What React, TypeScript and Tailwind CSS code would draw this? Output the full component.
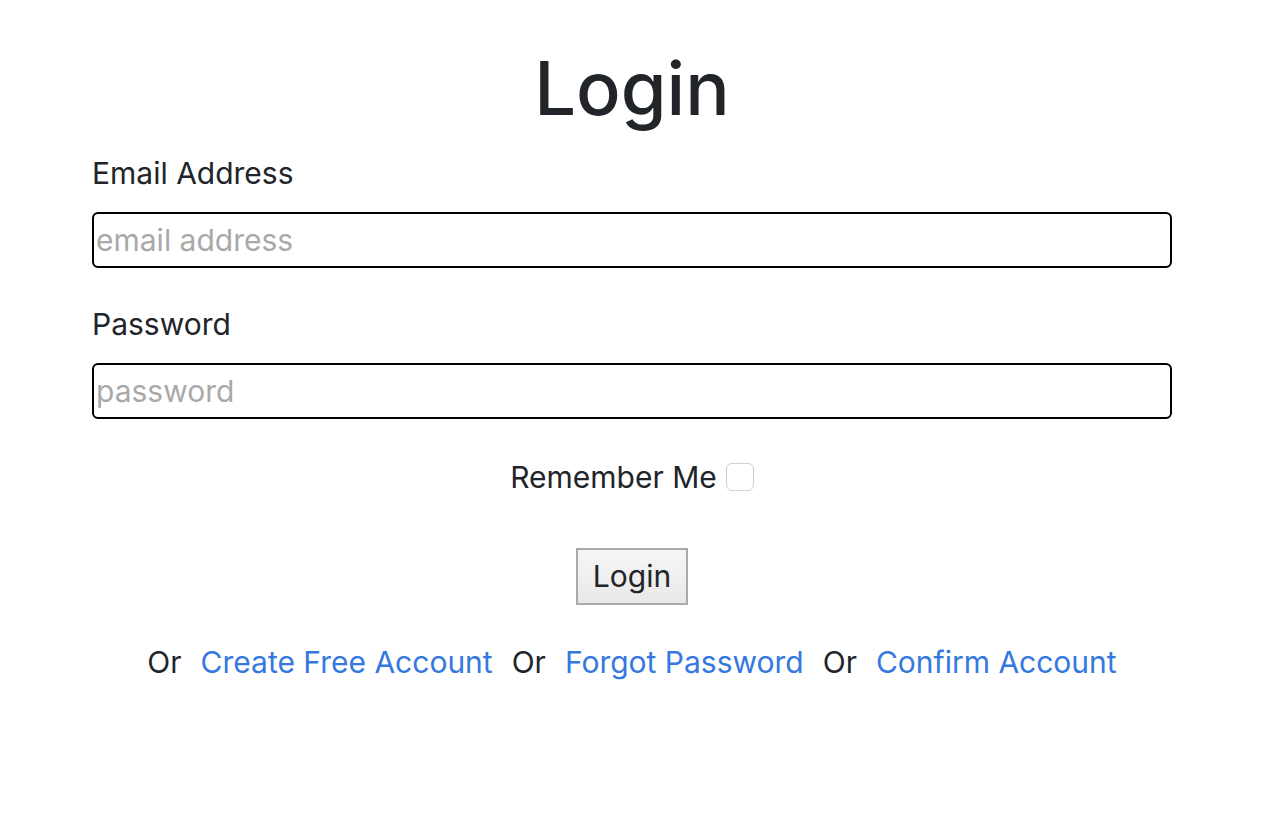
export default function App() {
  return (
    <div className="min-h-screen bg-white text-[#212529] font-['Inter','Liberation_Sans',sans-serif]">
      <div className="ml-[92px] w-[1080px] pt-[38px]">
        <h1 className="text-center text-[74px] leading-[100px] font-medium">Login</h1>
        <form className="mt-[16px]">
          <label htmlFor="email" className="block text-[30px] leading-[38px]">Email Address</label>
          <input
            id="email"
            type="email"
            placeholder="email address"
            className="mt-[20px] block w-full h-[56px] rounded-[6px] border-2 border-black px-[2px] text-[30px] placeholder:text-[#a9a9a9] outline-none"
          />
          <label htmlFor="password" className="mt-[37px] block text-[30px] leading-[38px]">Password</label>
          <input
            id="password"
            type="password"
            placeholder="password"
            className="mt-[20px] block w-full h-[56px] rounded-[6px] border-2 border-black px-[2px] text-[30px] placeholder:text-[#a9a9a9] outline-none"
          />
          <div className="mt-[39px] flex items-center justify-center gap-[9px]">
            <span className="text-[30px] leading-[38px]">Remember Me</span>
            <input
              type="checkbox"
              className="appearance-none w-[28px] h-[28px] rounded-[6px] border border-[#d0d0d0] bg-white"
            />
          </div>
          <div className="mt-[52px] flex justify-center">
            <button
              type="button"
              className="h-[57px] px-[15px] border-2 border-[#aaaaaa] bg-gradient-to-b from-[#f6f6f6] to-[#e8e8e8] text-[30px]"
            >
              Login
            </button>
          </div>
          <div className="mt-[38px] flex justify-center gap-[19px] text-[30px] leading-[38px]">
            <span>Or</span>
            <a href="#" className="text-[#3478e0]">Create Free Account</a>
            <span>Or</span>
            <a href="#" className="text-[#3478e0]">Forgot Password</a>
            <span>Or</span>
            <a href="#" className="text-[#3478e0]">Confirm Account</a>
          </div>
        </form>
      </div>
    </div>
  );
}
